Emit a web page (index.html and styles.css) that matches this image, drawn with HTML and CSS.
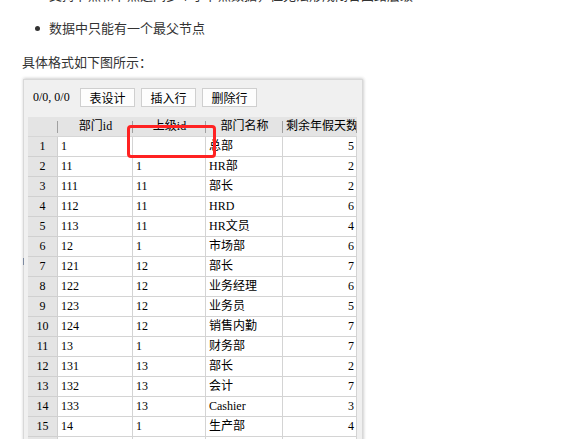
FILE: index.html
```html
<!DOCTYPE html>
<html lang="zh">
<head>
<meta charset="utf-8">
<link rel="stylesheet" href="styles.css">
</head>
<body>
<div class="page">
  <ul class="list">
    <li>支持节点和节点之间多个子节点数据，但无法形成闭合回路层级</li>
    <li>数据中只能有一个最父节点</li>
  </ul>
  <p class="para">具体格式如下图所示：</p>
  <div class="shot">
    <div class="toolbar">
      <span class="pos">0/0, 0/0</span>
      <button class="btn">表设计</button>
      <button class="btn">插入行</button>
      <button class="btn">删除行</button>
    </div>
    <div class="grid">
      <div class="row head">
        <div class="c num"></div>
        <div class="c h">部门id</div>
        <div class="c h">上级id</div>
        <div class="c h">部门名称</div>
        <div class="c h">剩余年假天数</div>
      </div>
      <div class="row"><div class="c num">1</div><div class="c">1</div><div class="c"></div><div class="c">总部</div><div class="c r">5</div></div>
      <div class="row"><div class="c num">2</div><div class="c">11</div><div class="c">1</div><div class="c">HR部</div><div class="c r">2</div></div>
      <div class="row"><div class="c num">3</div><div class="c">111</div><div class="c">11</div><div class="c">部长</div><div class="c r">2</div></div>
      <div class="row"><div class="c num">4</div><div class="c">112</div><div class="c">11</div><div class="c">HRD</div><div class="c r">6</div></div>
      <div class="row"><div class="c num">5</div><div class="c">113</div><div class="c">11</div><div class="c">HR文员</div><div class="c r">4</div></div>
      <div class="row"><div class="c num">6</div><div class="c">12</div><div class="c">1</div><div class="c">市场部</div><div class="c r">6</div></div>
      <div class="row"><div class="c num">7</div><div class="c">121</div><div class="c">12</div><div class="c">部长</div><div class="c r">7</div></div>
      <div class="row"><div class="c num">8</div><div class="c">122</div><div class="c">12</div><div class="c">业务经理</div><div class="c r">6</div></div>
      <div class="row"><div class="c num">9</div><div class="c">123</div><div class="c">12</div><div class="c">业务员</div><div class="c r">5</div></div>
      <div class="row"><div class="c num">10</div><div class="c">124</div><div class="c">12</div><div class="c">销售内勤</div><div class="c r">7</div></div>
      <div class="row"><div class="c num">11</div><div class="c">13</div><div class="c">1</div><div class="c">财务部</div><div class="c r">7</div></div>
      <div class="row"><div class="c num">12</div><div class="c">131</div><div class="c">13</div><div class="c">部长</div><div class="c r">2</div></div>
      <div class="row"><div class="c num">13</div><div class="c">132</div><div class="c">13</div><div class="c">会计</div><div class="c r">7</div></div>
      <div class="row"><div class="c num">14</div><div class="c">133</div><div class="c">13</div><div class="c">Cashier</div><div class="c r">3</div></div>
      <div class="row"><div class="c num">15</div><div class="c">14</div><div class="c">1</div><div class="c">生产部</div><div class="c r">4</div></div>
      <div class="row"><div class="c num"></div><div class="c"></div><div class="c"></div><div class="c"></div><div class="c"></div></div>
    </div>
    <div class="mark"></div>
    <div class="tick"></div>
  </div>
</div>
</body>
</html>
```

FILE: styles.css
```css
html, body {
  margin: 0;
  padding: 0;
  background: #fff;
  overflow: hidden;
  height: 439px;
}
.page {
  font-family: "Noto Sans CJK SC", sans-serif;
  font-size: 13px;
  color: #333;
  padding-left: 23px;
  margin-top: -16px;
}
.list {
  margin: 0;
  padding-left: 26px;
  list-style: none;
}
.list li {
  position: relative;
  height: 22px;
  line-height: 22px;
  margin-bottom: 11px;
  white-space: nowrap;
}
.list li::before {
  content: "";
  position: absolute;
  left: -14px;
  top: 9px;
  width: 5px;
  height: 5px;
  border-radius: 50%;
  background: #333;
}
.para {
  margin: 12px 0 0 -1px;
  height: 22px;
  line-height: 22px;
}
.shot {
  position: relative;
  margin-top: 6px;
  width: 338px;
  height: 400px;
  border: 1px solid #d8d8d8;
  border-bottom: none;
  background: #f0f0f0;
  box-shadow: 0 -1px 3px rgba(0,0,0,0.12), 1px 0 3px rgba(0,0,0,0.12);
}
.toolbar {
  height: 37px;
  box-sizing: border-box;
  padding: 8px 0 0 9px;
  display: flex;
  align-items: flex-start;
  gap: 6px;
}
.pos {
  font-family: "Liberation Serif", serif;
  font-size: 12px;
  color: #000;
  line-height: 19px;
  width: 41px;
  white-space: nowrap;
}
.btn {
  width: 55px;
  height: 19px;
  margin: 0;
  padding: 0;
  border: 1px solid #cfcfcf;
  background: #fdfdfd;
  font-family: "Noto Sans CJK SC", sans-serif;
  font-size: 12px;
  line-height: 17px;
  color: #000;
}
.grid {
  margin-left: 4px;
  width: 329px;
  background: #fff;
  font-family: "Liberation Serif", "Noto Sans CJK SC", serif;
  font-size: 12px;
  color: #000;
}
.row {
  display: grid;
  grid-template-columns: 30px 75px 73px 77px 74px;
  height: 20px;
}
.c {
  box-sizing: border-box;
  height: 20px;
  line-height: 19px;
  border-right: 1px solid #d4d4d4;
  border-bottom: 1px solid #d4d4d4;
  padding: 0 3px;
  white-space: nowrap;
  overflow: hidden;
}
.c.r {
  text-align: right;
  padding-right: 2px;
}
.c.num {
  background: #e4e4e4;
  text-align: center;
  border-right-color: #d0d0d0;
  border-bottom-color: #d0d0d0;
  padding: 0;
}
.head .c {
  background: #e4e4e4;
  border-right: none;
  border-bottom: 1px solid #d6d6d6;
  position: relative;
  text-align: center;
}
.head .c::after {
  content: "";
  position: absolute;
  right: 0;
  top: 4px;
  width: 1px;
  height: 12px;
  background: #a0a0a0;
}
.mark {
  position: absolute;
  left: 103px;
  top: 45px;
  width: 89px;
  height: 33px;
  box-sizing: border-box;
  border: 3px solid #f22;
  border-radius: 4px;
}
.tick {
  position: absolute;
  left: -1px;
  top: 178px;
  width: 1px;
  height: 7px;
  background: #7d8aa0;
}
```
